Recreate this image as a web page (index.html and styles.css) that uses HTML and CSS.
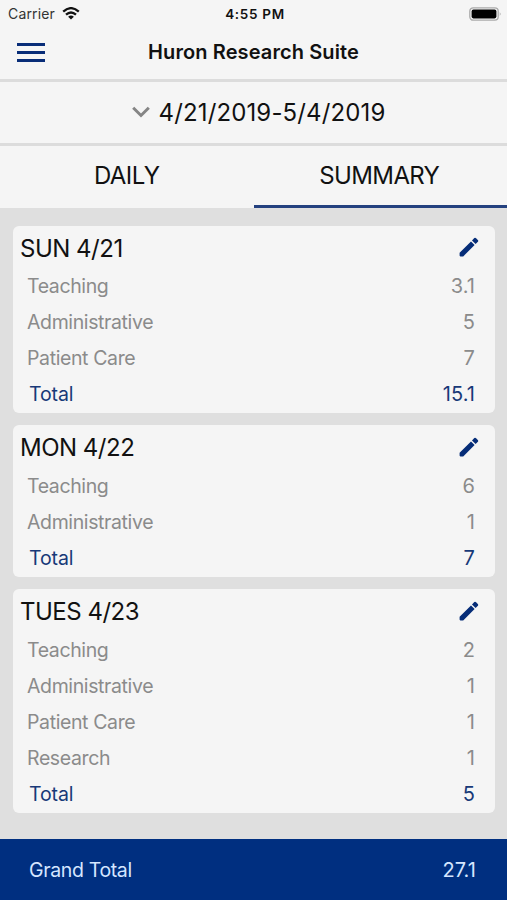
FILE: index.html
```html
<!DOCTYPE html>
<html lang="en">
<head>
<meta charset="utf-8">
<title>Huron Research Suite</title>
<link rel="stylesheet" href="styles.css">
</head>
<body>
<svg class="defs" aria-hidden="true"><symbol id="pencil" viewBox="0 0 20 20"><path d="M.6 15.8 12 4.4 15.6 8 4.2 19.4H1.4Q.6 19.4.6 18.6ZM13 3.4 15.3 1.1Q16.2.3 17.1 1.2L18.8 2.9Q19.7 3.8 18.9 4.7L16.6 7Z"/></symbol></svg>
<header class="status">
  <div class="carrier"><span>Carrier</span>
    <svg class="wifi" viewBox="0 0 18 13"><g fill="none" stroke="#111" stroke-width="2.3"><path d="M1.2 4.7Q9-2.4 16.8 4.7"/><path d="M4 7.7Q9 3.2 14 7.7"/></g><path d="M9 12.6 6.1 9.7Q9 7.2 11.9 9.7Z" fill="#111"/></svg>
  </div>
  <span class="time">4:55 PM</span>
  <svg class="battery" viewBox="0 0 33 14"><rect x=".8" y=".8" width="28.4" height="12.4" rx="3.4" fill="none" stroke="#aaa" stroke-width="1.3"/><rect x="2.6" y="2.6" width="24.8" height="8.8" rx="1.8"/><path d="M30.8 5Q32.4 7 30.8 9Z" fill="#999"/></svg>
</header>
<nav class="bar">
  <div class="menu"><i></i><i></i><i></i></div>
  <h1>Huron Research Suite</h1>
</nav>
<div class="period">
  <svg class="chevron" viewBox="0 0 18 12"><path d="M1.2 1.8 9 9.5 16.8 1.8" fill="none" stroke="#858585" stroke-width="3"/></svg>
  <span>4/21/2019-5/4/2019</span>
</div>
<div class="tabs"><div class="tab"><span>DAILY</span></div><div class="tab active"><span>SUMMARY</span></div></div>
<main>
  <section class="card">
    <h2><span>SUN 4/21</span><svg class="edit"><use href="#pencil"/></svg></h2>
    <div class="row"><span>Teaching</span><b>3.1</b></div>
    <div class="row"><span>Administrative</span><b>5</b></div>
    <div class="row"><span>Patient Care</span><b>7</b></div>
    <div class="row total"><span>Total</span><b>15.1</b></div>
  </section>
  <section class="card">
    <h2><span>MON 4/22</span><svg class="edit"><use href="#pencil"/></svg></h2>
    <div class="row"><span>Teaching</span><b>6</b></div>
    <div class="row"><span>Administrative</span><b>1</b></div>
    <div class="row total"><span>Total</span><b>7</b></div>
  </section>
  <section class="card">
    <h2><span>TUES 4/23</span><svg class="edit"><use href="#pencil"/></svg></h2>
    <div class="row"><span>Teaching</span><b>2</b></div>
    <div class="row"><span>Administrative</span><b>1</b></div>
    <div class="row"><span>Patient Care</span><b>1</b></div>
    <div class="row"><span>Research</span><b>1</b></div>
    <div class="row total"><span>Total</span><b>5</b></div>
  </section>
</main>
<footer><span>Grand Total</span><b>27.1</b></footer>
</body>
</html>
```
FILE: styles.css
```css
* { box-sizing: border-box; }
body { margin: 0; height: 900px; display: flex; flex-direction: column; overflow: hidden; background: #f5f5f5; color: #111; font-family: Inter, "Liberation Sans", sans-serif; }
svg { display: block; }
.defs { display: none; }
.status { height: 27px; flex: none; display: grid; grid-template-columns: 1fr auto 1fr; align-items: center; padding: 0 5px 0 8px; }
.carrier { display: flex; align-items: center; gap: 7px; font-size: 14px; letter-spacing: .15px; color: #333; }
.wifi { width: 18px; height: 13px; }
.time { font-size: 13.5px; font-weight: 600; letter-spacing: .7px; }
.battery { width: 33px; height: 14px; justify-self: end; }
.bar { height: 55px; flex: none; display: grid; grid-template-columns: 60px 1fr 60px; align-items: center; border-bottom: 3px solid #dcdcdc; padding-bottom: 2px; }
.menu { display: grid; gap: 5px; width: 28px; margin-left: 17px; }
.menu i { height: 3px; background: #082d78; }
h1 { margin: 0; text-align: center; font-size: 20px; font-weight: 600; letter-spacing: .1px; }
.period { height: 64px; flex: none; display: flex; align-items: center; justify-content: center; gap: 9px; padding: 0 0 0 10px; border-bottom: 3px solid #dcdcdc; font-size: 24px; letter-spacing: .13px; }
.chevron { width: 18px; height: 12px; margin-bottom: 2px; }
.tabs { height: 62px; flex: none; display: grid; grid-template-columns: 1fr 1fr; font-size: 24px; }
.tab { display: flex; align-items: center; justify-content: center; padding-bottom: 3px; letter-spacing: -.6px; }
.active { border-bottom: 3px solid #24417f; padding: 0 2px 0 0; }
main { flex: 1; display: flex; flex-direction: column; gap: 12.2px; padding: 17.5px 12px 0 13px; background: #dfdfdf; }
.card { padding: 0 20px 1px 14px; border-radius: 6px; background: #f5f5f5; }
h2 { display: flex; align-items: center; justify-content: space-between; height: 43px; margin: 0 -4px 0 -7px; padding-top: 2px; font-size: 24px; font-weight: 400; letter-spacing: -.5px; }
.edit { width: 20px; height: 20px; margin-bottom: 2px; fill: #062d78; }
.row { height: 35.9px; display: flex; align-items: center; justify-content: space-between; font-size: 19.5px; letter-spacing: -.38px; color: #8b8b8b; }
.row b, footer b { font-weight: 400; font-size: 20px; letter-spacing: .1px; }
.total { padding-left: 2px; color: #183978; }
.total span { letter-spacing: -.1px; }
footer { height: 61px; flex: none; display: flex; align-items: center; justify-content: space-between; padding: 1px 31px 0 29px; background: #002f80; color: #d5e6ff; font-size: 19.5px; letter-spacing: -.35px; }
```
